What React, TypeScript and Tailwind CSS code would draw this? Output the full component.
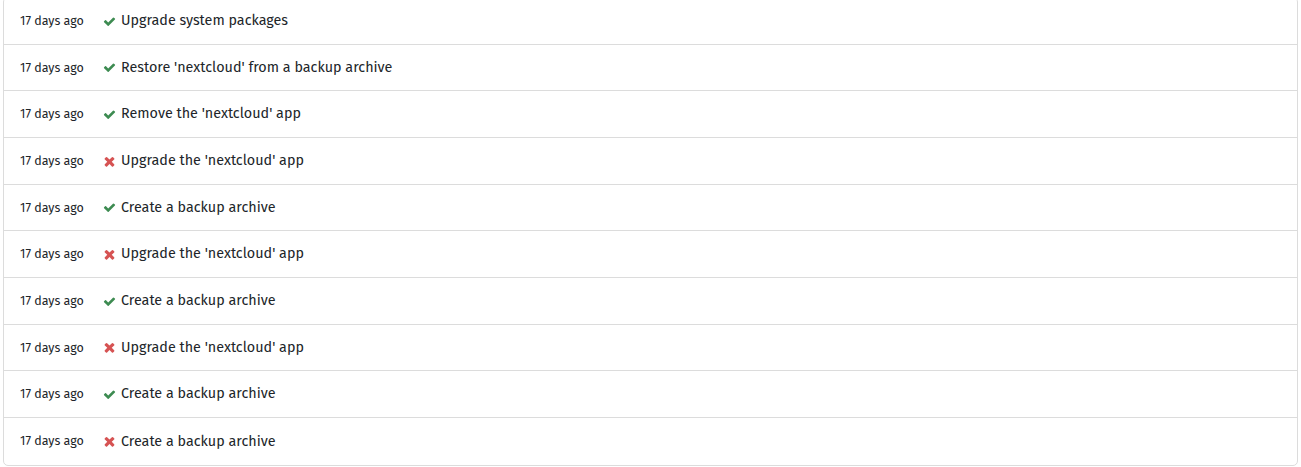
import React from "react";

type Item = { ok: boolean; label: string };

const items: Item[] = [
  { ok: true, label: "Upgrade system packages" },
  { ok: true, label: "Restore 'nextcloud' from a backup archive" },
  { ok: true, label: "Remove the 'nextcloud' app" },
  { ok: false, label: "Upgrade the 'nextcloud' app" },
  { ok: true, label: "Create a backup archive" },
  { ok: false, label: "Upgrade the 'nextcloud' app" },
  { ok: true, label: "Create a backup archive" },
  { ok: false, label: "Upgrade the 'nextcloud' app" },
  { ok: true, label: "Create a backup archive" },
  { ok: false, label: "Create a backup archive" },
];

function Check() {
  return (
    <svg width="13" height="13" viewBox="0 0 1792 1792" className="shrink-0">
      <path
        fill="#3d8b51"
        d="M1671 566q0 40-28 68l-724 724-136 136q-28 28-68 28t-68-28l-136-136-362-362q-28-28-28-68t28-68l136-136q28-28 68-28t68 28l294 295 656-657q28-28 68-28t68 28l136 136q28 28 28 68z"
      />
    </svg>
  );
}

function Cross() {
  return (
    <svg width="13" height="13" viewBox="-86 126 1580 1580" className="shrink-0">
      <path
        fill="#d65353"
        d="M1298 1322q0 40-28 68l-136 136q-28 28-68 28t-68-28l-294-294-294 294q-28 28-68 28t-68-28l-136-136q-28-28-28-68t28-68l294-294-294-294q-28-28-28-68t28-68l136-136q28-28 68-28t68 28l294 294 294-294q28-28 68-28t68 28l136 136q28 28 28 68t-28 68l-294 294 294 294q28 28 28 68z"
      />
    </svg>
  );
}

export default function App() {
  return (
    <div className="w-[1301px] h-[467px] overflow-hidden bg-white px-[3px]">
      <div
        className="-mt-[3px] border border-[#dcdcdc] rounded-[5px] bg-white text-[#212529]"
        style={{ fontFamily: "'Fira Sans', Lato, 'Noto Sans', sans-serif" }}
      >
        {items.map((it, i) => (
          <div
            key={i}
            className={`flex items-center h-[46.67px] pl-4 pt-[1px] ${
              i < items.length - 1 ? "border-b border-[#dcdcdc]" : ""
            }`}
          >
            <span className="w-[83px] shrink-0 text-[12.5px] leading-none">17 days ago</span>
            {it.ok ? <Check /> : <Cross />}
            <span className="ml-[5px] text-[14.35px] leading-none">{it.label}</span>
          </div>
        ))}
      </div>
    </div>
  );
}
